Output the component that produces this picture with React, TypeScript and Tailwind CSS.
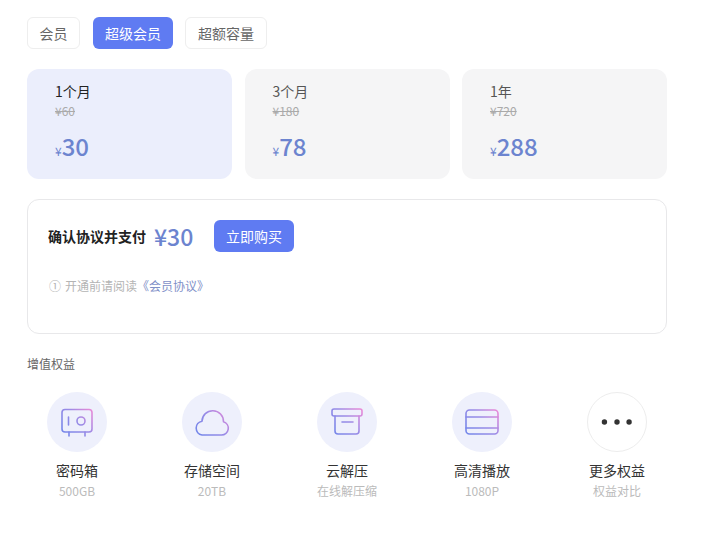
const plans = [
  { name: '1个月', old: '¥60', price: '30', active: true },
  { name: '3个月', old: '¥180', price: '78', active: false },
  { name: '1年', old: '¥720', price: '288', active: false },
];

const perks = [
  { id: 'safe', title: '密码箱', sub: '500GB' },
  { id: 'cloud', title: '存储空间', sub: '20TB' },
  { id: 'box', title: '云解压', sub: '在线解压缩' },
  { id: 'card', title: '高清播放', sub: '1080P' },
  { id: 'more', title: '更多权益', sub: '权益对比' },
];

function PerkIcon({ id }: { id: string }) {
  if (id === 'more') {
    return (
      <svg width="60" height="60" viewBox="0 0 60 60">
        <circle cx="17" cy="30" r="2.8" fill="#333" />
        <circle cx="30" cy="30" r="2.8" fill="#333" />
        <circle cx="42.5" cy="30" r="2.8" fill="#333" />
      </svg>
    );
  }
  const stroke = `url(#grad-${id})`;
  return (
    <svg width="60" height="60" viewBox="0 0 60 60" fill="none" stroke={stroke} strokeWidth="1.6" strokeLinecap="round" strokeLinejoin="round">
      <defs>
        <linearGradient id={`grad-${id}`} gradientUnits="userSpaceOnUse" x1="14" y1="44" x2="46" y2="16">
          <stop offset="0" stopColor="#6f86ea" />
          <stop offset="0.55" stopColor="#9a8be6" />
          <stop offset="1" stopColor="#f28ad6" />
        </linearGradient>
      </defs>
      {id === 'safe' && (
        <>
          <rect x="15" y="17.5" width="30" height="22.5" rx="3" />
          <path d="M21.5 25v8M22 40v4M38 40v4" />
          <circle cx="34" cy="29" r="4" />
        </>
      )}
      {id === 'cloud' && (
        <path d="M20 43h19.5a6.8 6.8 0 0 0 2-13.3A10.5 10.5 0 0 0 20 29.2a7 7 0 0 0 0 13.8z" />
      )}
      {id === 'box' && (
        <>
          <rect x="15" y="17" width="30" height="7" rx="2" />
          <path d="M18 24v15a3 3 0 0 0 3 3h18a3 3 0 0 0 3-3V24M25 30h11" />
        </>
      )}
      {id === 'card' && (
        <>
          <rect x="14" y="18" width="32" height="24" rx="3.5" />
          <path d="M14 25h32M14 36h32" />
        </>
      )}
    </svg>
  );
}

export default function App() {
  return (
    <div className="min-h-[539px] w-[714px] bg-white pl-[27px] pt-[17px] font-['Noto_Sans_CJK_SC',sans-serif] text-[#333]">
      <div className="flex items-center">
        <button className="h-8 w-[53px] rounded-md border border-[#eeeeee] text-[14px] text-[#666]">会员</button>
        <button className="ml-[13px] h-8 w-20 rounded-md bg-[#5f7bf2] text-[14px] text-white">超级会员</button>
        <button className="ml-3 h-8 w-[82px] rounded-md border border-[#eeeeee] text-[14px] text-[#666]">超额容量</button>
      </div>

      <div className="mt-5 grid w-[640px] grid-cols-3 gap-[12.5px]">
        {plans.map((p) => (
          <div key={p.name} className={`h-[110px] rounded-xl pl-7 pt-[12px] ${p.active ? 'bg-[#ebeefc]' : 'bg-[#f5f5f6]'}`}>
            <div className={`text-[14px] leading-5 ${p.active ? 'text-[#222]' : 'text-[#555]'}`}>{p.name}</div>
            <div className="mt-[2px] text-xs leading-4 text-[#aaa] line-through">{p.old}</div>
            <div className="mt-[11px] flex items-baseline leading-9 text-[#6c84cf]">
              <span className="text-xs">¥</span>
              <span className="text-2xl font-medium">{p.price}</span>
            </div>
          </div>
        ))}
      </div>

      <div className="mt-5 h-[135px] w-[640px] rounded-xl border border-[#e8e8ea] pl-5 pt-5">
        <div className="flex h-8 items-center">
          <span className="w-[98px] text-[14px] font-semibold leading-none whitespace-nowrap text-[#222]">确认协议并支付</span>
          <span className="ml-2 w-10 text-[23px] font-medium text-[#6c84cf]">¥30</span>
          <button className="ml-5 h-8 w-20 rounded-md bg-[#5f7bf2] text-[14px] text-white">立即购买</button>
        </div>
        <div className="mt-[25px] flex items-center text-xs leading-[18px] text-[#b4b4b4]">
          <span className="w-[17px] pl-[1px]">①</span>
          <span>开通前请阅读</span>
          <span className="text-[#7f90c8]">《会员协议》</span>
        </div>
      </div>

      <div className="mt-[21px] text-xs leading-[18px] text-[#666]">增值权益</div>

      <div className="mt-[19px] flex w-[640px] justify-between">
        {perks.map((perk) => (
          <div key={perk.id} className="flex w-[100px] flex-col items-center">
            <div className={`flex h-[60px] w-[60px] items-center justify-center rounded-full ${perk.id === 'more' ? 'border border-[#ededed]' : 'bg-[#eef0fc]'}`}>
              <PerkIcon id={perk.id} />
            </div>
            <div className="mt-2 text-[14px] leading-5 text-[#333]">{perk.title}</div>
            <div className="mt-[1px] text-xs leading-5 text-[#bbb]">{perk.sub}</div>
          </div>
        ))}
      </div>
    </div>
  );
}
